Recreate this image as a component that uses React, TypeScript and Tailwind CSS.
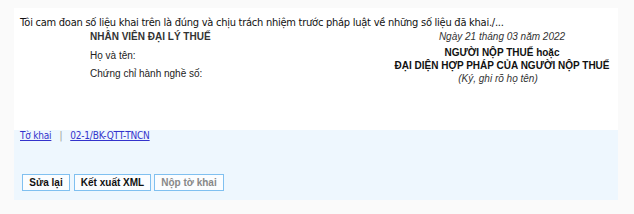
import React from "react";

export default function App() {
  return (
    <div className="w-[634px] h-[214px] bg-[#fafafa] pt-[8px] pl-[14px]">
      <div className="w-[604px]">
        <div className="bg-white h-[122px]">
          <div className="pl-[6px] pt-[7px] text-[11px] leading-[16px] text-[#111] font-['DejaVu_Sans_Condensed','DejaVu_Sans',sans-serif] whitespace-nowrap tracking-[-0.25px]">
            Tôi cam đoan số liệu khai trên là đúng và chịu trách nhiệm trước pháp luật về những số liệu đã khai./...
          </div>
          <div className="flex font-['Liberation_Sans',Arial,sans-serif] text-[10px] text-[#222]">
            <div className="pl-[76px] w-[372px]">
              <div className="font-bold leading-[12px] text-[#333]">NHÂN VIÊN ĐẠI LÝ THUẾ</div>
              <div className="mt-[7px] leading-[12px]">Họ và tên:</div>
              <div className="mt-[6px] leading-[12px]">Chứng chỉ hành nghề số:</div>
            </div>
            <div className="flex-1 flex flex-col items-center">
              <div className="italic leading-[12px] text-[#333]">Ngày 21 tháng 03 năm 2022</div>
              <div className="mt-[3px] font-bold leading-[13px] text-[#111]">NGƯỜI NỘP THUẾ hoặc</div>
              <div className="font-bold leading-[13px] text-[#111] whitespace-nowrap">ĐẠI DIỆN HỢP PHÁP CỦA NGƯỜI NỘP THUẾ</div>
              <div className="italic leading-[13px] text-[#333] pr-[8px]">(Ký, ghi rõ họ tên)</div>
            </div>
          </div>
        </div>
        <div className="bg-[#eef7fe] h-[70px] px-[6px]">
          <div className="flex items-center text-[10px] leading-[12px] h-[12px] text-[#3333cc] font-['DejaVu_Sans_Condensed','DejaVu_Sans',sans-serif] tracking-[-0.2px]">
            <a className="underline" href="#">Tờ khai</a>
            <span className="mx-[8px] text-[#999]">|</span>
            <a className="underline" href="#">02-1/BK-QTT-TNCN</a>
          </div>
          <div className="flex mt-[32px] pl-[2px] text-[10px] font-bold font-['Liberation_Sans',Arial,sans-serif] whitespace-nowrap">
            <button className="h-[17px] w-[48px] border border-[#80c0f0] bg-[#fbfdff] text-[#111] leading-[14px]">Sửa lại</button>
            <button className="ml-[4px] h-[17px] w-[77px] border border-[#80c0f0] bg-[#fbfdff] text-[#111] leading-[14px]">Kết xuất XML</button>
            <button className="ml-[3px] h-[17px] w-[70px] border border-[#80c0f0] bg-[#fbfdff] text-[#888] leading-[14px]">Nộp tờ khai</button>
          </div>
        </div>
      </div>
    </div>
  );
}
